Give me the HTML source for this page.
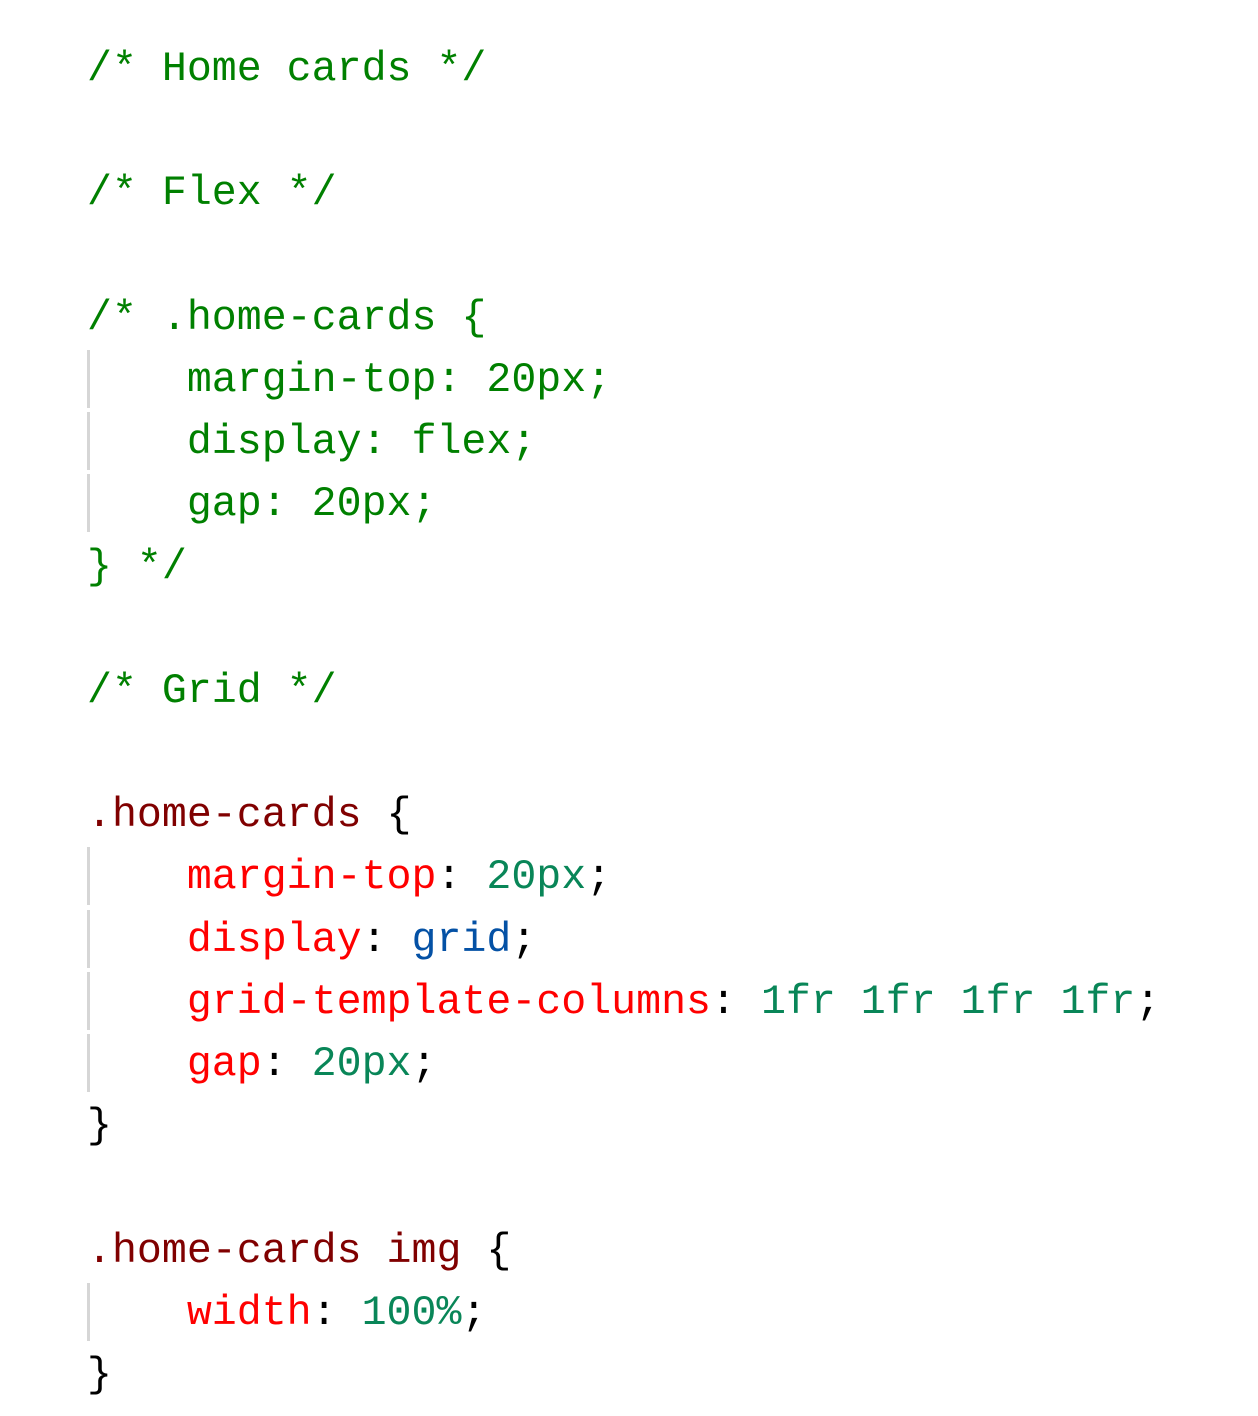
<!DOCTYPE html>
<html><head><meta charset="utf-8"><style>
html,body{margin:0;padding:0;background:#fff;width:1258px;height:1416px;overflow:hidden}
.code{position:absolute;left:87px;top:39px;font-family:"Liberation Mono",monospace;font-size:41.6px;line-height:62.2px;color:#000}
.l{height:62.2px;position:relative;white-space:pre}
.g{position:absolute;left:0;top:0px;width:3px;height:58px;background:#d6d6d6}
.c{color:#008000}.s{color:#800000}.p{color:#ff0000}.v{color:#098658}.k{color:#0451a5}
</style></head><body><div class="code"><div class="l"><span class="c">/* Home cards */</span></div><div class="l"> </div><div class="l"><span class="c">/* Flex */</span></div><div class="l"> </div><div class="l"><span class="c">/* .home-cards {</span></div><div class="l"><span class="g"></span><span class="c">    margin-top: 20px;</span></div><div class="l"><span class="g"></span><span class="c">    display: flex;</span></div><div class="l"><span class="g"></span><span class="c">    gap: 20px;</span></div><div class="l"><span class="c">} */</span></div><div class="l"> </div><div class="l"><span class="c">/* Grid */</span></div><div class="l"> </div><div class="l"><span class="s">.home-cards</span> {</div><div class="l"><span class="g"></span>    <span class="p">margin-top</span>: <span class="v">20px</span>;</div><div class="l"><span class="g"></span>    <span class="p">display</span>: <span class="k">grid</span>;</div><div class="l"><span class="g"></span>    <span class="p">grid-template-columns</span>: <span class="v">1fr 1fr 1fr 1fr</span>;</div><div class="l"><span class="g"></span>    <span class="p">gap</span>: <span class="v">20px</span>;</div><div class="l">}</div><div class="l"> </div><div class="l"><span class="s">.home-cards img</span> {</div><div class="l"><span class="g"></span>    <span class="p">width</span>: <span class="v">100%</span>;</div><div class="l">}</div></div></body></html>
